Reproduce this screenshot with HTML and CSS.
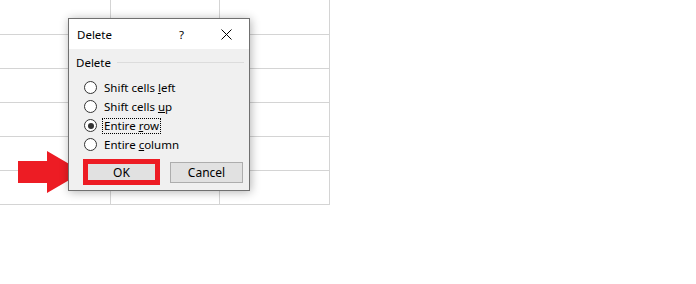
FILE: index.html
```html
<!DOCTYPE html>
<html lang="en">
<head>
    <meta charset="UTF-8">
    <title>Delete dialog</title>
    <link rel="stylesheet" href="styles.css">
</head>
<body>
    <div class="sheet">
        <div class="grid">
            <div class="cell"></div><div class="cell"></div><div class="cell"></div>
            <div class="cell"></div><div class="cell"></div><div class="cell"></div>
            <div class="cell"></div><div class="cell"></div><div class="cell"></div>
            <div class="cell"></div><div class="cell"></div><div class="cell"></div>
            <div class="cell"></div><div class="cell"></div><div class="cell"></div>
            <div class="cell"></div><div class="cell"></div><div class="cell"></div>
        </div>

        <!-- red pointer drawn over the sheet -->
        <svg class="arrow" width="66" height="44" viewBox="0 0 66 44">
            <polygon points="0,10 29,10 29,0 65,21 29,42 29,32 0,32" fill="#ed1c24"/>
        </svg>

        <div class="dialog">
            <div class="title-bar">
                <span class="title">Delete</span>
                <span class="help">?</span>
                <svg class="close" width="11" height="11" viewBox="0 0 11 11">
                    <path d="M0.5 0.5 L10.5 10.5 M10.5 0.5 L0.5 10.5" stroke="#000" stroke-width="1" fill="none"/>
                </svg>
            </div>
            <div class="body">
                <div class="group-label">
                    <span>Delete</span>
                    <span class="rule"></span>
                </div>
                <ul class="options">
                    <li class="option"><span class="radio"></span><span class="label">Shift cells <u>l</u>eft</span></li>
                    <li class="option"><span class="radio"></span><span class="label">Shift cells <u>u</u>p</span></li>
                    <li class="option"><span class="radio checked"></span><span class="label focused">Entire <u>r</u>ow</span></li>
                    <li class="option"><span class="radio"></span><span class="label">Entire <u>c</u>olumn</span></li>
                </ul>
                <div class="buttons">
                    <button class="btn btn-ok">OK</button>
                    <button class="btn">Cancel</button>
                </div>
            </div>
        </div>
    </div>
</body>
</html>
```

FILE: styles.css
```css
body {
    margin: 0;
    background: #fff;
    font-family: "Noto Sans", "Open Sans", sans-serif;
    font-size: 11.5px;
    color: #000;
}
.sheet {
    position: relative;
    width: 696px;
    height: 284px;
}
.grid {
    display: grid;
    grid-template-columns: 111px 109px 110px;
    grid-template-rows: 35px repeat(5, 34px);
    width: 330px;
}
.cell {
    border-right: 1px solid #d4d4d4;
    border-bottom: 1px solid #d4d4d4;
}
.arrow {
    position: absolute;
    left: 18px;
    top: 151px;
}
.dialog {
    position: absolute;
    left: 68px;
    top: 18px;
    width: 180px;
    height: 171px;
    border: 1px solid #707070;
    background: #f0f0f0;
    box-shadow: 1px 1px 9px rgba(0, 0, 0, 0.3);
    display: flex;
    flex-direction: column;
}
.title-bar {
    height: 30px;
    background: #fff;
    display: flex;
    align-items: center;
    padding-left: 8px;
}
.title {
    flex: 1;
}
.help {
    margin-right: 37px;
}
.close {
    margin-right: 17px;
}
.body {
    padding: 6px 5px 0 7px;
}
.group-label {
    display: flex;
    align-items: center;
    gap: 6px;
    height: 16px;
    line-height: 16px;
}
.rule {
    flex: 1;
    height: 1px;
    background: #dcdcdc;
    margin-top: -2px;
}
.options {
    list-style: none;
    margin: 7px 0 0 0;
    padding: 0 0 0 8px;
}
.option {
    display: flex;
    align-items: center;
    height: 19px;
}
.radio {
    width: 11px;
    height: 11px;
    border: 1px solid #333;
    border-radius: 50%;
    background: #fff;
    margin-right: 5px;
    display: flex;
    align-items: center;
    justify-content: center;
}
.radio.checked::after {
    content: "";
    width: 6px;
    height: 6px;
    border-radius: 50%;
    background: #333;
}
.label {
    border: 1px dotted transparent;
    padding: 0 1px;
    line-height: 14px;
}
.label.focused {
    border-color: #000;
}
.buttons {
    display: flex;
    align-items: center;
    gap: 10px;
    margin-top: 5px;
    padding-left: 7px;
}
.btn {
    font-family: inherit;
    font-size: 12px;
    color: #000;
    width: 73px;
    height: 21px;
    padding: 0;
    background: #e1e1e1;
    border: 1px solid #adadad;
}
.btn-ok {
    width: 77px;
    height: 26px;
    border: 5px solid #ed1c24;
}
```
